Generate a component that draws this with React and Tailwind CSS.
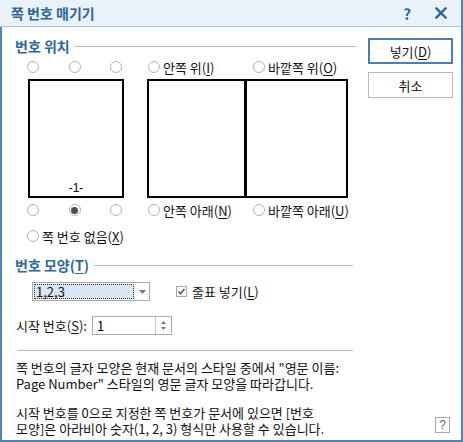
import React from 'react';

const FONT = { fontFamily: '"Noto Sans CJK KR", "Liberation Sans", sans-serif' };

function Radio({ checked }) {
  return (
    <span className="w-[12px] h-[12px] shrink-0 rounded-full border border-[#b4b4b4] bg-white flex items-center justify-center">
      {checked && <span className="w-[7px] h-[7px] rounded-full bg-[#505050]" />}
    </span>
  );
}

function Mn({ children }) {
  return <span className="underline underline-offset-2">{children}</span>;
}

function RadioLabel({ children, checked }) {
  return (
    <span className="flex items-center gap-[3px] h-[14px] text-[13px] leading-none text-[#111]">
      <Radio checked={checked} />
      <span>{children}</span>
    </span>
  );
}

function Heading({ children }) {
  return (
    <div className="flex items-center h-[16px] gap-[5px]">
      <span className="text-[14px] font-bold text-[#2f679c] leading-none">{children}</span>
      <span className="flex-1 h-px bg-[#b8b8b8]" />
    </div>
  );
}

export default function App() {
  return (
    <div className="w-[463px] h-[442px] bg-white flex flex-col border-r-2 border-[#4f84b6] select-none" style={FONT}>
      {/* title bar */}
      <div className="h-[27px] shrink-0 bg-[#e9f1f9] border-b border-[#aac6e0] flex items-center pl-[11px]">
        <span className="text-[14px] font-bold text-[#2f6497] leading-none">쪽 번호 매기기</span>
        <span className="ml-auto text-[15px] font-bold text-[#2f6497] leading-none mr-[24px]">?</span>
        <svg width="12" height="12" viewBox="0 0 12 12" className="mr-[14px]">
          <path d="M1.5 1.5 L10.5 10.5 M10.5 1.5 L1.5 10.5" stroke="#2f6497" strokeWidth="2.4" strokeLinecap="square" />
        </svg>
      </div>

      <div className="flex-1 flex border-l-2 border-b-2 border-[#4f84b6]">
        {/* left column */}
        <div className="w-[354px] pl-[13px] pt-[11px] flex flex-col">
          <Heading>번호 위치</Heading>

          <div className="mt-[6px] flex items-center h-[14px]">
            <div className="ml-[12px] w-[96px] flex justify-between pr-[1px]">
              <Radio />
              <Radio />
              <Radio />
            </div>
            <div className="ml-[25px] w-[105px]">
              <RadioLabel>안쪽 위(<Mn>I</Mn>)</RadioLabel>
            </div>
            <RadioLabel>바깥쪽 위(<Mn>O</Mn>)</RadioLabel>
          </div>

          <div className="mt-[5px] flex h-[119px]">
            <div className="ml-[13px] w-[96px] border-2 border-black flex items-end justify-center pb-[2px]">
              <span className="text-[12px] leading-none" style={{ fontFamily: '"Liberation Sans", sans-serif' }}>-1-</span>
            </div>
            <div className="ml-[23px] w-[201px] border-2 border-black flex">
              <div className="w-[98px] border-r-[3px] border-black" />
              <div className="flex-1" />
            </div>
          </div>

          <div className="mt-[5px] flex items-center h-[14px]">
            <div className="ml-[12px] w-[96px] flex justify-between pr-[1px]">
              <Radio />
              <Radio checked />
              <Radio />
            </div>
            <div className="ml-[25px] w-[105px]">
              <RadioLabel>안쪽 아래(<Mn>N</Mn>)</RadioLabel>
            </div>
            <RadioLabel>바깥쪽 아래(<Mn>U</Mn>)</RadioLabel>
          </div>

          <div className="mt-[12px] ml-[12px]">
            <RadioLabel>쪽 번호 없음(<Mn>X</Mn>)</RadioLabel>
          </div>

          <div className="mt-[14px] pr-[3px]">
            <Heading>번호 모양(<Mn>T</Mn>)</Heading>
          </div>

          <div className="mt-[9px] flex items-center h-[19px]">
            <div className="ml-[17px] w-[118px] h-[19px] border border-[#a9a9a9] bg-white flex">
              <div className="w-[100px] m-[1px] border border-dotted border-[#333] bg-[#d9e6f4] flex items-center pl-[1px]">
                <span className="text-[13px] leading-none text-[#111]">1,2,3</span>
              </div>
              <div className="flex-1 flex items-center justify-center">
                <svg width="7" height="4" viewBox="0 0 7 4">
                  <path d="M0 0 L7 0 L3.5 4 Z" fill="#777" />
                </svg>
              </div>
            </div>
            <div className="ml-[26px] flex items-center gap-[5px]">
              <span className="w-[11px] h-[11px] border border-[#a9a9a9] bg-white flex items-center justify-center">
                <svg width="9" height="9" viewBox="0 0 9 9">
                  <path d="M1.5 4.5 L3.5 6.5 L7.5 2" stroke="#555" strokeWidth="1.6" fill="none" />
                </svg>
              </span>
              <span className="text-[13px] leading-none text-[#111]">줄표 넣기(<Mn>L</Mn>)</span>
            </div>
          </div>

          <div className="mt-[15px] flex items-center h-[19px]">
            <span className="ml-[1px] text-[13px] leading-none text-[#111]">시작 번호(<Mn>S</Mn>):</span>
            <div className="ml-[5px] w-[80px] h-[19px] border border-[#a9a9a9] bg-white flex">
              <div className="flex-1 flex items-center pl-[4px]">
                <span className="text-[13px] leading-none">1</span>
              </div>
              <div className="w-[16px] border-l border-[#c8c8c8] flex flex-col items-center justify-center gap-[3px]">
                <svg width="5" height="3" viewBox="0 0 5 3"><path d="M0 3 L5 3 L2.5 0 Z" fill="#777" /></svg>
                <svg width="5" height="3" viewBox="0 0 5 3"><path d="M0 0 L5 0 L2.5 3 Z" fill="#777" /></svg>
              </div>
            </div>
          </div>

          <div className="mt-[15px] ml-[2px] mr-[3px] h-px bg-[#b8b8b8]" />

          <div className="mt-[9px] ml-[1px] text-[13px] leading-[16px] text-[#111] whitespace-nowrap">
            <p>쪽 번호의 글자 모양은 현재 문서의 스타일 중에서 "영문 이름:</p>
            <p>Page Number" 스타일의 영문 글자 모양을 따라갑니다.</p>
          </div>
          <div className="mt-[13px] ml-[1px] text-[13px] leading-[16px] text-[#111] whitespace-nowrap">
            <p>시작 번호를 0으로 지정한 쪽 번호가 문서에 있으면 [번호</p>
            <p>모양]은 아라비아 숫자(1, 2, 3) 형식만 사용할 수 있습니다.</p>
          </div>
        </div>

        {/* right column */}
        <div className="ml-[12px] w-[85px] pt-[11px] flex flex-col">
          <button className="h-[26px] border-2 border-[#4a7fb2] bg-white text-[13px] leading-none text-[#111]">
            넣기(<Mn>D</Mn>)
          </button>
          <button className="mt-[8px] h-[26px] border border-[#b9b9b9] bg-white text-[13px] leading-none text-[#111]">
            취소
          </button>
          <div className="mt-auto mb-[7px] self-end mr-[3px] w-[15px] h-[16px] border border-[#a9a9a9] flex items-center justify-center">
            <span className="text-[12px] leading-none text-[#666]" style={{ fontFamily: '"Liberation Sans", sans-serif' }}>?</span>
          </div>
        </div>
      </div>
    </div>
  );
}
